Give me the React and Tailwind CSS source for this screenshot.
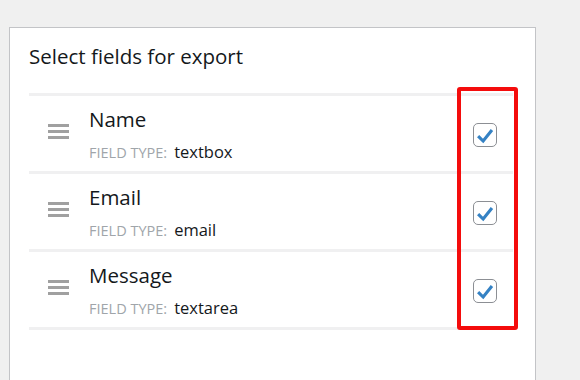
import React from "react";

const fields = [
  { name: "Name", type: "textbox" },
  { name: "Email", type: "email" },
  { name: "Message", type: "textarea" },
];

function DragHandle() {
  return (
    <svg width="21" height="15" viewBox="0 0 21 15" className="mb-[5px] shrink-0">
      <rect x="0" y="0" width="21" height="3" fill="#a0a0a0" />
      <rect x="0" y="6" width="21" height="3" fill="#a0a0a0" />
      <rect x="0" y="12" width="21" height="3" fill="#a0a0a0" />
    </svg>
  );
}

function CheckBox() {
  return (
    <div className="w-[24px] h-[24px] mt-[3px] shrink-0 rounded-[5px] border border-[#8c8f94] bg-white flex items-center justify-center">
      <svg width="24" height="24" viewBox="0 0 24 24">
        <path
          d="M4.5 13.2 L10 18.6 L19.6 6.6"
          fill="none"
          stroke="#3582c4"
          strokeWidth="3.4"
        />
      </svg>
    </div>
  );
}

export default function App() {
  return (
    <div
      className="w-[580px] h-[380px] overflow-hidden bg-[#f0f0f0] pl-[9px] pt-[27px]"
      style={{ fontFamily: '"Open Sans", "Noto Sans", sans-serif' }}
    >
      <div className="relative w-[527px] h-[400px] bg-white border border-[#c3c4c7] pt-[14px] pl-[19px] pr-[22px]">
        <h2 className="text-[20.5px] leading-[28px] font-medium text-[#14181b] mb-[23px]">
          Select fields for export
        </h2>

        <div>
          {fields.map((f, i) => (
            <div
              key={f.name}
              className={
                "flex items-center h-[78px] border-t-[3px] border-[#f0f0f1] pl-[19px] pr-[16px]" +
                (i === fields.length - 1 ? " border-b-[3px] h-[81px]" : "")
              }
            >
              <DragHandle />
              <div className="flex-1 ml-[20px]">
                <div className="text-[20.5px] leading-[28px] font-medium text-[#14181b]">
                  {f.name}
                </div>
                <div className="mt-[9px] flex items-baseline leading-[20px]">
                  <span className="text-[14.5px] uppercase text-[#a0a5aa]">Field type:</span>
                  <span className="ml-[7px] text-[16.5px] text-[#14181b]">{f.type}</span>
                </div>
              </div>
              <CheckBox />
            </div>
          ))}
        </div>

        {/* highlight annotation */}
        <div className="absolute left-[447px] top-[59px] w-[61px] h-[243px] border-[4px] border-[#f40c0c] rounded-[3px]" />
      </div>
    </div>
  );
}
